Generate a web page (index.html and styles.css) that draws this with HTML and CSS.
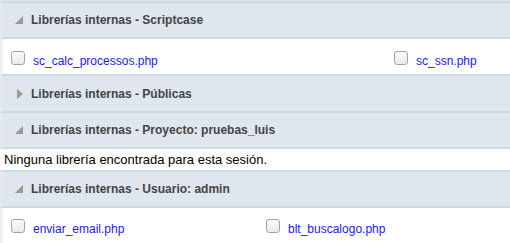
FILE: index.html
```html
<!DOCTYPE html>
<html>
<head lang="es">
    <meta charset="UTF-8">
    <title>Librerías</title>
    <link rel="stylesheet" href="styles.css">
</head>
<body>
    <div id="libs">
        <div class="strip"></div>

        <div class="sec-head open">
            <svg class="tog" width="8" height="8" viewBox="0 0 8 8"><polygon points="8,0 8,8 0,8" /></svg>
            <span>Librerías internas - Scriptcase</span>
        </div>
        <div class="files files-a">
            <label class="file"><span class="chk"></span><a href="#">sc_calc_processos.php</a></label>
            <label class="file"><span class="chk"></span><a href="#">sc_ssn.php</a></label>
        </div>

        <div class="sec-head">
            <svg class="tog" width="6" height="10" viewBox="0 0 6 10"><polygon points="0,0 6,5 0,10" /></svg>
            <span>Librerías internas - Públicas</span>
        </div>

        <div class="sec-head open">
            <svg class="tog" width="8" height="8" viewBox="0 0 8 8"><polygon points="8,0 8,8 0,8" /></svg>
            <span>Librerías internas - Proyecto: pruebas_luis</span>
        </div>
        <div class="empty">Ninguna librería encontrada para esta sesión.</div>

        <div class="sec-head open">
            <svg class="tog" width="8" height="8" viewBox="0 0 8 8"><polygon points="8,0 8,8 0,8" /></svg>
            <span>Librerías internas - Usuario: admin</span>
        </div>
        <div class="files files-b">
            <label class="file"><span class="chk"></span><a href="#">enviar_email.php</a></label>
            <label class="file"><span class="chk"></span><a href="#">blt_buscalogo.php</a></label>
        </div>
    </div>
</body>
</html>
```

FILE: styles.css
```css
*{
    margin: 0;
    padding: 0;
    box-sizing: border-box;
}
body{
    background: #fff;
    font-family: "Liberation Sans", Arial, sans-serif;
    width: 510px;
    overflow: hidden;
}
.strip{
    height: 1px;
    background: #dfe6ed;
}
.sec-head{
    display: flex;
    align-items: center;
    height: 38px;
    padding-left: 12px;
    background: #dfe6ed;
    border-top: 2px solid #cfd9e1;
    border-bottom: 2px solid #cfd9e1;
    border-left: 3px solid #e3e9ef;
    font-size: 12px;
    font-weight: bold;
    color: #444;
}
.sec-head + .sec-head{
    border-top: 0;
    height: 36px;
}
.files + .sec-head{
    border-top: 0;
    height: 37px;
}
.tog{
    fill: #9a9a9a;
    flex: none;
}
.sec-head.open .tog{
    margin-right: 8px;
}
.sec-head:not(.open) .tog{
    margin-left: 2px;
    margin-right: 8px;
}
.files{
    display: grid;
    height: 37px;
    padding-top: 12px;
    border-left: 3px solid #eef1f4;
    border-bottom: 2px solid #cfd9e1;
}
.files-a{
    grid-template-columns: 383px 1fr;
}
.files-b{
    grid-template-columns: 255px 1fr;
    padding-top: 11px;
    border-bottom: 0;
}
.file{
    display: flex;
    align-items: flex-start;
    padding-left: 8px;
    font-size: 12px;
    cursor: pointer;
}
.chk{
    width: 14px;
    height: 14px;
    border: 1px solid #a3a3a3;
    border-radius: 3px;
    background: linear-gradient(#fbfbfb, #e9e9e9);
    margin-right: 8px;
    flex: none;
}
.file a{
    color: #1a1af5;
    text-decoration: none;
    margin-top: 3px;
}
.empty{
    height: 21px;
    line-height: 21px;
    padding-left: 4px;
    font-size: 13px;
    color: #000;
}
```
